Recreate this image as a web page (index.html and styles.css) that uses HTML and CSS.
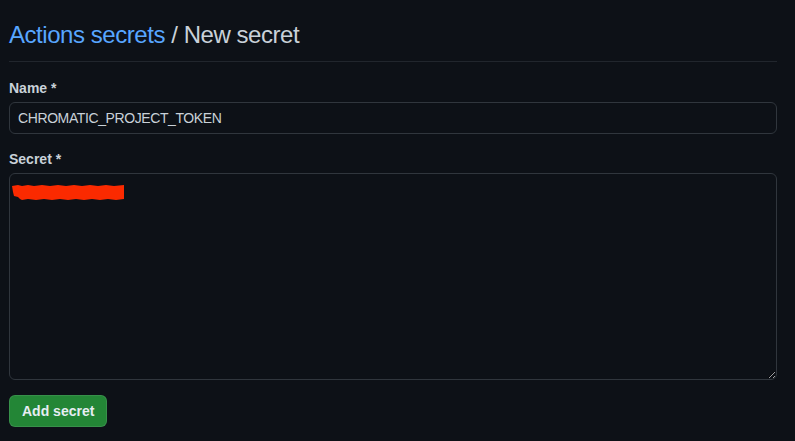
FILE: index.html
```html
<!DOCTYPE html>
<html lang="en">
<head>
<meta charset="utf-8">
<title>New secret</title>
<link rel="stylesheet" href="styles.css">
</head>
<body>
<main class="page">
  <div class="subhead">
    <h2 class="subhead-title"><a class="crumb" href="#">Actions secrets</a> / New secret</h2>
  </div>
  <form class="form">
    <div class="form-group">
      <label class="label" for="name">Name *</label>
      <input class="input" id="name" type="text" value="CHROMATIC_PROJECT_TOKEN">
    </div>
    <div class="form-group">
      <label class="label" for="secret">Secret *</label>
      <div class="textarea-wrap">
        <textarea class="textarea" id="secret"></textarea>
        <svg class="redaction" width="114" height="16" viewBox="0 0 114 16" aria-hidden="true">
          <path d="M0 1 L6 0 L10 1 L16 0 L22 1 L30 0 L38 1 L46 0 L54 1 L62 0 L70 1 L78 0 L86 1 L94 0 L102 1 L112 0 L112 14 L104 15 L96 14 L88 15 L80 14 L72 15 L64 14 L56 15 L48 14 L40 15 L32 14 L24 15 L16 14 L10 15 L8 14 L6 12 L2 11 L1 7 Z" fill="#fb2a00"/>
        </svg>
      </div>
    </div>
    <button class="btn-primary" type="button">Add secret</button>
  </form>
</main>
</body>
</html>
```
FILE: styles.css
```css
html, body {
  margin: 0;
  padding: 0;
  background: #0d1117;
  color-scheme: dark;
}
body {
  font-family: "Liberation Sans", Arial, sans-serif;
  color: #c9d1d9;
}
.page {
  width: 768px;
  padding-left: 9px;
  padding-top: 17px;
}
.subhead {
  padding-bottom: 8px;
  border-bottom: 1px solid #21262d;
  margin-bottom: 16px;
}
.subhead-title {
  margin: 0;
  font-size: 24px;
  line-height: 36px;
  font-weight: 400;
  letter-spacing: -0.45px;
  color: #c9d1d9;
}
.crumb {
  color: #58a6ff;
  text-decoration: none;
}
.form {
  display: flex;
  flex-direction: column;
  align-items: flex-start;
}
.form-group {
  display: flex;
  flex-direction: column;
  width: 100%;
  margin-bottom: 15px;
}
.label {
  font-size: 14px;
  line-height: 20px;
  font-weight: 700;
  color: #c9d1d9;
  margin-bottom: 4px;
}
.input {
  box-sizing: border-box;
  width: 100%;
  height: 32px;
  padding: 0 8px;
  font-family: "Liberation Sans", Arial, sans-serif;
  font-size: 14px;
  letter-spacing: -0.4px;
  color: #c9d1d9;
  background: #0d1117;
  border: 1px solid #30363d;
  border-radius: 6px;
  outline: none;
}
.textarea-wrap {
  position: relative;
  width: 100%;
  height: 207px;
}
.textarea {
  box-sizing: border-box;
  display: block;
  width: 100%;
  height: 207px;
  padding: 8px;
  background: #0d1117;
  border: 1px solid #30363d;
  border-radius: 6px;
  color: #c9d1d9;
  outline: none;
  resize: vertical;
}
.redaction {
  position: absolute;
  left: 3px;
  top: 12px;
}
.btn-primary {
  box-sizing: border-box;
  height: 32px;
  padding: 0 12px;
  white-space: nowrap;
  font-family: "Liberation Sans", Arial, sans-serif;
  font-size: 14px;
  font-weight: 700;
  color: #e6edf3;
  background: #238636;
  border: 1px solid rgba(240, 246, 252, 0.1);
  border-radius: 6px;
}
```
